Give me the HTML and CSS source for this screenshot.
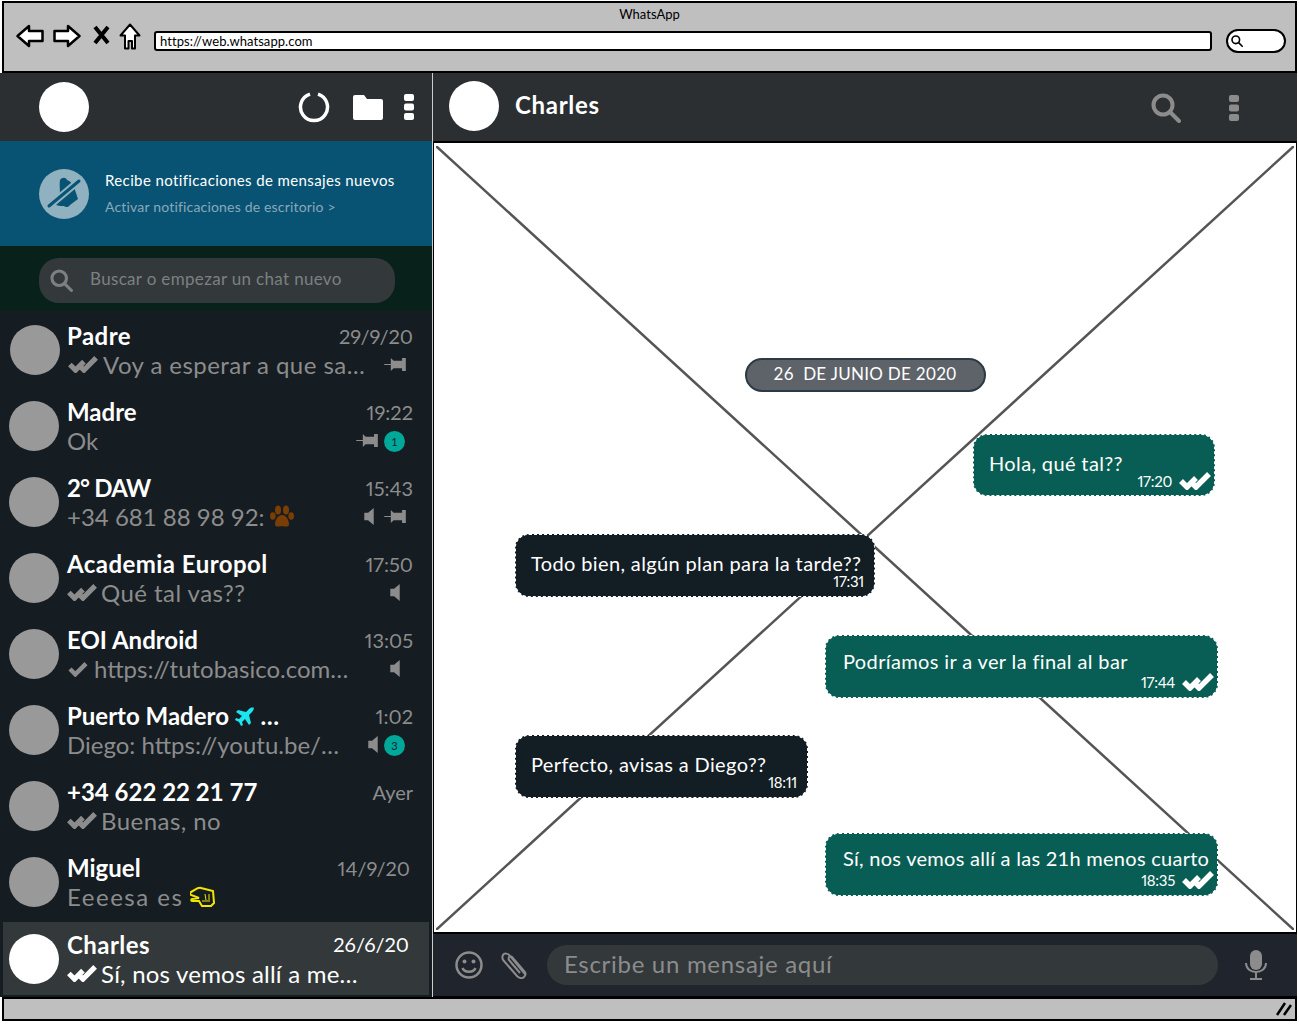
FILE: index.html
```html
<!DOCTYPE html>
<html lang="es">
<head>
	<meta charset="UTF-8">
	<title>WhatsApp</title>
	<link rel="stylesheet" href="styles.css">
</head>
<body>
	<svg class="defs" width="0" height="0">
		<symbol id="i-double" viewBox="0 0 32 18">
			<path d="M2 9l6 6 9-9M13 11l4 4L30 2" fill="none" stroke="currentColor" stroke-width="5.500"/>
		</symbol>
		<symbol id="i-check" viewBox="0 0 22 18">
			<path d="M2 9l6 6L20 3" fill="none" stroke="currentColor" stroke-width="5"/>
		</symbol>
		<symbol id="i-pin" viewBox="0 0 24 16">
			<path d="M0 7.500h7V1l3 3h9V1h4v14h-4v-3h-9l-3 3V8.500H0z" fill="currentColor"/>
		</symbol>
		<symbol id="i-speaker" viewBox="0 0 12 18">
			<path d="M1 5h4l6-5v18l-6-5H1z" fill="currentColor"/>
		</symbol>
		<symbol id="i-search" viewBox="0 0 30 30">
			<circle cx="12" cy="12" r="9.500" fill="none" stroke="currentColor" stroke-width="4"/>
			<path d="M19 19l9 9" stroke="currentColor" stroke-width="4" stroke-linecap="round"/>
		</symbol>
		<symbol id="i-dots" viewBox="0 0 10 26">
			<rect y="0" width="10" height="7" rx="2" fill="currentColor"/>
			<rect y="9.500" width="10" height="7" rx="2" fill="currentColor"/>
			<rect y="19" width="10" height="7" rx="2" fill="currentColor"/>
		</symbol>
	</svg>

	<div class="window">
		<header class="browser">
			<div class="browser-title">WhatsApp</div>
			<div class="browser-nav">
				<svg width="28" height="24" viewBox="0 0 28 24"><path d="M1.500 12L13 2v5h13.500v10H13v5z" fill="#fff" stroke="#000" stroke-width="2.500" stroke-linejoin="round"/></svg>
				<svg width="28" height="24" viewBox="0 0 28 24"><path d="M26.500 12L15 2v5H1.500v10H15v5z" fill="#fff" stroke="#000" stroke-width="2.500" stroke-linejoin="round"/></svg>
				<svg class="nav-close" width="17" height="20" viewBox="0 0 17 20"><path d="M2 2l13 16M15 2L2 18" stroke="#000" stroke-width="4"/></svg>
				<svg class="nav-home" width="22" height="27" viewBox="0 0 22 27"><path d="M11 1.500L1.500 12.500H6V25.500h3.500V18h3.500v7.500H16V12.500h4.500z" fill="#fff" stroke="#000" stroke-width="2" stroke-linejoin="round"/></svg>
				<div class="url-box">https://web.whatsapp.com</div>
				<div class="find-box">
					<svg width="12" height="12" viewBox="0 0 30 30"><use href="#i-search"/></svg>
				</div>
			</div>
		</header>

		<div class="app">
			<aside class="sidebar">
				<div class="side-head">
					<div class="avatar avatar-me"></div>
					<div class="side-tools">
						<svg width="32" height="32" viewBox="0 0 32 32"><path d="M12 3.200A13.500 13.500 0 1 0 20 3.200" fill="none" stroke="#fff" stroke-width="3.500"/></svg>
						<svg width="30" height="25" viewBox="0 0 30 25"><path d="M2 0h9l3 4h14a2 2 0 0 1 2 2v17a2 2 0 0 1-2 2H2a2 2 0 0 1-2-2V2a2 2 0 0 1 2-2z" fill="#fff"/></svg>
						<svg class="tool-dots" width="10" height="26"><use href="#i-dots"/></svg>
					</div>
				</div>

				<div class="notice">
					<div class="notice-icon">
						<svg width="38" height="38" viewBox="0 0 38 38">
							<path d="M15 5c2-3 6-3 7 0 5 2 7 6 8 10l3 9-8 6c-1 2-4 3-6 1-2 0-6 0-8-1l3-5c2-6 0-14 1-20z" fill="#085373"/>
							<path d="M3 32L35 5" stroke="#8fb1c0" stroke-width="7"/>
							<path d="M4 31L34 6" stroke="#085373" stroke-width="3" stroke-linecap="round"/>
						</svg>
					</div>
					<div class="notice-text">
						<div class="notice-title">Recibe notificaciones de mensajes nuevos</div>
						<div class="notice-sub">Activar notificaciones de escritorio &gt;</div>
					</div>
				</div>

				<div class="search-wrap">
					<div class="search-box">
						<svg width="23" height="23" viewBox="0 0 30 30"><use href="#i-search"/></svg>
						<span class="search-hint">Buscar o empezar un chat nuevo</span>
					</div>
				</div>

				<div class="chat-list">
					<div class="chat chat-first">
						<div class="avatar"></div>
						<div class="chat-body">
							<div class="chat-line"><span class="chat-name name-wide">Padre</span><span class="chat-time">29/9/20</span></div>
							<div class="chat-line">
								<span class="chat-msg msg-wide"><svg class="tick" width="30" height="17"><use href="#i-double"/></svg>Voy a esperar a que sa…</span>
								<span class="chat-meta"><svg width="23" height="15"><use href="#i-pin"/></svg></span>
							</div>
						</div>
					</div>
					<div class="chat">
						<div class="avatar"></div>
						<div class="chat-body">
							<div class="chat-line"><span class="chat-name">Madre</span><span class="chat-time">19:22</span></div>
							<div class="chat-line">
								<span class="chat-msg">Ok</span>
								<span class="chat-meta"><svg width="23" height="15"><use href="#i-pin"/></svg><span class="badge">1</span></span>
							</div>
						</div>
					</div>
					<div class="chat">
						<div class="avatar"></div>
						<div class="chat-body">
							<div class="chat-line"><span class="chat-name name-narrow">2° DAW</span><span class="chat-time">15:43</span></div>
							<div class="chat-line">
								<span class="chat-msg">+34 681 88 98 92:<svg class="paw" width="24" height="23" viewBox="0 0 24 23"><ellipse cx="8" cy="5" rx="3" ry="4.500" fill="#7a3e05"/><ellipse cx="16" cy="5" rx="3" ry="4.500" fill="#7a3e05"/><ellipse cx="2.800" cy="11" rx="2.800" ry="3.800" fill="#7a3e05"/><ellipse cx="21.200" cy="11" rx="2.800" ry="3.800" fill="#7a3e05"/><path d="M12 10c4 0 7 5 7 9 0 3-3 3-7 2-4 1-7 1-7-2 0-4 3-9 7-9z" fill="#7a3e05"/></svg></span>
								<span class="chat-meta"><svg width="12" height="17"><use href="#i-speaker"/></svg><svg width="23" height="15"><use href="#i-pin"/></svg></span>
							</div>
						</div>
					</div>
					<div class="chat">
						<div class="avatar"></div>
						<div class="chat-body">
							<div class="chat-line"><span class="chat-name name-wide">Academia Europol</span><span class="chat-time">17:50</span></div>
							<div class="chat-line">
								<span class="chat-msg msg-wide"><svg class="tick" width="30" height="17"><use href="#i-double"/></svg>Qué tal vas??</span>
								<span class="chat-meta meta-solo"><svg width="12" height="17"><use href="#i-speaker"/></svg></span>
							</div>
						</div>
					</div>
					<div class="chat">
						<div class="avatar"></div>
						<div class="chat-body">
							<div class="chat-line"><span class="chat-name">EOI Android</span><span class="chat-time">13:05</span></div>
							<div class="chat-line">
								<span class="chat-msg"><svg class="tick tick-one" width="22" height="16"><use href="#i-check"/></svg>https://tutobasico.com…</span>
								<span class="chat-meta meta-solo"><svg width="12" height="17"><use href="#i-speaker"/></svg></span>
							</div>
						</div>
					</div>
					<div class="chat">
						<div class="avatar"></div>
						<div class="chat-body">
							<div class="chat-line"><span class="chat-name">Puerto Madero <svg class="plane" width="20" height="20" viewBox="0 0 20 20"><path d="M19 1c-2-1-4 0-5 1l-3 3L3 3 1 5l6 4-3 3-3-1-1 2 4 2 2 4 2-1-1-3 3-3 4 6 2-2-2-8 3-3c1-1 2-3 2-5z" fill="#19e6ee"/></svg> …</span><span class="chat-time">1:02</span></div>
							<div class="chat-line">
								<span class="chat-msg">Diego: https://youtu.be/…</span>
								<span class="chat-meta"><svg width="12" height="17"><use href="#i-speaker"/></svg><span class="badge">3</span></span>
							</div>
						</div>
					</div>
					<div class="chat">
						<div class="avatar"></div>
						<div class="chat-body">
							<div class="chat-line"><span class="chat-name">+34 622 22 21 77</span><span class="chat-time">Ayer</span></div>
							<div class="chat-line">
								<span class="chat-msg msg-wide"><svg class="tick" width="30" height="17"><use href="#i-double"/></svg>Buenas, no</span>
							</div>
						</div>
					</div>
					<div class="chat chat-old">
						<div class="avatar"></div>
						<div class="chat-body">
							<div class="chat-line"><span class="chat-name">Miguel</span><span class="chat-time">14/9/20</span></div>
							<div class="chat-line">
								<span class="chat-msg msg-loose">Eeeesa es<svg class="hand" width="25" height="22" viewBox="0 0 25 22"><path d="M1 6c4-2 7-5 10-4l12 3 1 12-3 3-9 0-3-5-7 0c-1 0-1-2 0-2l7-1-8-3c-1-1-1-3 0-3z" fill="none" stroke="#f2e600" stroke-width="2"/><path d="M15 8l1 6M19 8l0 6M12 15l8 0" fill="none" stroke="#f2e600" stroke-width="1"/></svg></span>
							</div>
						</div>
					</div>
					<div class="chat chat-active">
						<div class="avatar avatar-me"></div>
						<div class="chat-body">
							<div class="chat-line"><span class="chat-name name-wide">Charles</span><span class="chat-time">26/6/20</span></div>
							<div class="chat-line">
								<span class="chat-msg msg-slight"><svg class="tick" width="30" height="17"><use href="#i-double"/></svg>Sí, nos vemos allí a me…</span>
							</div>
						</div>
					</div>
				</div>
			</aside>

			<main class="conversation">
				<div class="conv-head">
					<div class="avatar avatar-me"></div>
					<div class="conv-name">Charles</div>
					<svg class="conv-search" width="30" height="30"><use href="#i-search"/></svg>
					<svg class="conv-dots" width="10" height="26"><use href="#i-dots"/></svg>
				</div>

				<div class="canvas">
					<svg class="canvas-x" viewBox="0 0 100 100" preserveAspectRatio="none">
						<path d="M0 0L100 100M100 0L0 100" stroke="#555" stroke-width="2.500" vector-effect="non-scaling-stroke"/>
					</svg>
					<div class="day-pill">26&nbsp; DE JUNIO DE 2020</div>

					<div class="bubble bubble-out bubble-first">
						<div class="bubble-text">Hola, qué tal??</div>
						<div class="bubble-meta">17:20<svg width="32" height="18"><use href="#i-double"/></svg></div>
					</div>
					<div class="bubble bubble-in">
						<div class="bubble-text">Todo bien, algún plan para la tarde??</div>
						<div class="bubble-meta">17:31</div>
					</div>
					<div class="bubble bubble-out bubble-wide">
						<div class="bubble-text text-up">Podríamos ir a ver la final al bar</div>
						<div class="bubble-meta">17:44<svg width="32" height="18"><use href="#i-double"/></svg></div>
					</div>
					<div class="bubble bubble-in bubble-short">
						<div class="bubble-text">Perfecto, avisas a Diego??</div>
						<div class="bubble-meta">18:11</div>
					</div>
					<div class="bubble bubble-out bubble-wide bubble-last">
						<div class="bubble-text text-higher">Sí, nos vemos allí a las 21h menos cuarto</div>
						<div class="bubble-meta">18:35<svg width="32" height="18"><use href="#i-double"/></svg></div>
					</div>
				</div>

				<div class="composer">
					<svg width="28" height="28" viewBox="0 0 28 28"><circle cx="14" cy="14" r="12.500" fill="none" stroke="#8c8c8c" stroke-width="2.500"/><circle cx="9.500" cy="10.500" r="2" fill="#8c8c8c"/><circle cx="18.500" cy="10.500" r="2" fill="#8c8c8c"/><path d="M7.500 17c2 5 11 5 13 0" fill="none" stroke="#8c8c8c" stroke-width="2.500"/></svg>
					<svg class="clip" width="27" height="28" viewBox="0 0 27 28"><path d="M24 23L9 5c-2-3-6-3-7-1s-1 4 1 6l13 15c2 2 5 3 7 1s2-4 0-6L11 6c-1-1-3-1-3 0s-1 2 0 3l11 13" fill="none" stroke="#8c8c8c" stroke-width="2"/></svg>
					<div class="msg-input">Escribe un mensaje aquí</div>
					<svg class="mic" width="22" height="30" viewBox="0 0 22 30"><rect x="5" y="0" width="12" height="20" rx="6" fill="#8c8c8c"/><path d="M1 13c0 12 20 12 20 0M11 23v6M5 29h12" fill="none" stroke="#8c8c8c" stroke-width="2"/></svg>
				</div>
			</main>
		</div>

		<footer class="statusbar">
			<svg width="16" height="14" viewBox="0 0 16 14"><path d="M1 13L9 1M8 13L15 3" stroke="#000" stroke-width="2.500"/></svg>
		</footer>
	</div>
</body>
</html>
```

FILE: styles.css
```css
body{
	margin: 0;
	background: #fff;
	font-family: "Lato", "Open Sans", sans-serif;
}
.defs{
	position: absolute;
}
.window{
	width: 1297px;
	padding-top: 1px;
}

/* browser chrome */
.browser{
	height: 68px;
	margin-left: 2px;
	background: #bfbfbf;
	border: 2px solid #000;
}
.browser-title{
	height: 19px;
	line-height: 22px;
	text-align: center;
	font-size: 13px;
	color: #000;
}
.browser-nav{
	display: flex;
	align-items: flex-start;
	padding: 2px 9px 0 12px;
	gap: 9px;
}
.nav-close{
	margin: 1px 0 0 3px;
}
.nav-home{
	margin-top: -1px;
}
.url-box{
	flex: 1;
	height: 16px;
	margin: 7px 0 0 4px;
	padding-left: 4px;
	line-height: 16px;
	font-size: 13px;
	letter-spacing: .07px;
	color: #000;
	background: #fff;
	border: 2px solid #000;
	border-radius: 3px;
}
.find-box{
	display: flex;
	align-items: center;
	box-sizing: border-box;
	width: 60px;
	height: 24px;
	margin: 5px 0 0 5px;
	padding-left: 3px;
	color: #000;
	background: #fff;
	border: 2px solid #000;
	border-radius: 13px;
}

/* layout */
.app{
	display: flex;
	height: 924px;
}
.avatar{
	flex: none;
	width: 50px;
	height: 50px;
	border-radius: 50%;
	background: #999;
}
.avatar-me{
	background: #fff;
}

/* sidebar */
.sidebar{
	display: flex;
	flex-direction: column;
	width: 432px;
	background: #151c22;
	border-right: 1px solid #ccc;
}
.side-head{
	display: flex;
	align-items: center;
	justify-content: space-between;
	height: 68px;
	padding: 0 18px 0 39px;
	background: #2b2f32;
}
.side-tools{
	display: flex;
	align-items: center;
	gap: 23px;
}
.tool-dots{
	color: #fff;
	margin-left: -2px;
}
.notice{
	display: flex;
	align-items: center;
	gap: 16px;
	height: 105px;
	padding-left: 39px;
	background: #085373;
}
.notice-icon{
	display: flex;
	align-items: center;
	justify-content: center;
	width: 50px;
	height: 50px;
	border-radius: 50%;
	background: #8fb1c0;
}
.notice-text{
	margin-bottom: 2px;
}
.notice-title{
	font-size: 15px;
	letter-spacing: .38px;
	color: #fff;
}
.notice-sub{
	margin-top: 9px;
	font-size: 14px;
	letter-spacing: .18px;
	color: #8aa9b8;
}
.search-wrap{
	height: 65px;
	padding: 12px 37px 0 39px;
	box-sizing: border-box;
	background: #08211b;
}
.search-box{
	display: flex;
	align-items: center;
	gap: 17px;
	height: 45px;
	padding-left: 11px;
	font-size: 17px;
	letter-spacing: .33px;
	color: #7c8082;
	background: #33383b;
	border-radius: 20px;
}
.search-hint{
	padding-bottom: 4px;
}
.chat-list{
	flex: 1;
	display: flex;
	flex-direction: column;
	padding-top: 1px;
}
.chat{
	display: flex;
	align-items: center;
	gap: 8px;
	height: 76px;
	padding: 0 19px 0 9px;
	box-sizing: border-box;
}
.chat-first .avatar{
	margin: 0 -1px 0 1px;
}
.chat-first .tick{
	margin: 0 5px 0 1px;
}
.chat-old .chat-time{
	margin-right: 3px;
}
.chat-active{
	height: 73px;
	margin: 2px 3px 0;
	padding: 0 16px 0 6px;
	background: #33393b;
}
.chat-active .chat-time{
	color: #fff;
	margin-right: 4px;
}
.chat-active .chat-msg{
	color: #fff;
}
.chat-body{
	flex: 1;
	min-width: 0;
}
.chat-line{
	display: flex;
	align-items: center;
	justify-content: space-between;
	height: 29px;
}
.chat-name{
	font-size: 24px;
	font-weight: 700;
	color: #fff;
	white-space: nowrap;
}
.name-wide{
	letter-spacing: .45px;
}
.name-narrow{
	letter-spacing: -.8px;
}
.chat-time{
	font-size: 20px;
	font-variant-numeric: proportional-nums;
	color: #8c8c8c;
}
.chat-msg{
	display: flex;
	align-items: center;
	font-size: 24px;
	color: #8c8c8c;
	white-space: nowrap;
}
.msg-wide{
	letter-spacing: .45px;
}
.msg-slight{
	letter-spacing: .22px;
}
.msg-loose{
	letter-spacing: 1.5px;
}
.chat-meta{
	display: flex;
	align-items: center;
	gap: 9px;
	padding-right: 6px;
	color: #8c8c8c;
}
.meta-solo{
	padding-right: 12px;
}
.badge{
	display: block;
	width: 21px;
	height: 21px;
	margin: 2px 2px 0 -4px;
	line-height: 21px;
	border-radius: 50%;
	text-align: center;
	font-size: 11px;
	letter-spacing: 0;
	color: #123;
	background: #00a899;
}
.tick{
	margin: 0 4px 0 0;
}
.tick-one{
	margin-right: 5px;
}
.paw{
	margin-left: 5px;
}
.hand{
	margin-left: 7px;
}
.plane{
	vertical-align: -2px;
}

/* conversation */
.conversation{
	flex: 1;
	display: flex;
	flex-direction: column;
	min-width: 0;
	background: #000;
}
.conv-head{
	display: flex;
	align-items: center;
	flex: none;
	height: 68px;
	padding: 0 58px 0 16px;
	background: #2b2f32;
}
.conv-head .avatar{
	margin-bottom: 2px;
}
.conv-name{
	flex: 1;
	margin: 0 0 6px 16px;
	font-size: 24px;
	font-weight: 700;
	letter-spacing: .7px;
	color: #fff;
}
.conv-search{
	color: #8c8c8c;
	margin: 2px 48px 0 0;
}
.conv-dots{
	color: #8c8c8c;
	margin-top: 2px;
}
.canvas{
	position: relative;
	display: flex;
	flex-direction: column;
	box-sizing: border-box;
	height: 789px;
	margin: 2px 1px;
	padding-top: 215px;
	background: #fff;
	overflow: hidden;
}
.canvas-x{
	position: absolute;
	left: 2px;
	top: 3px;
	width: calc(100% - 4px);
	height: calc(100% - 5px);
}
.day-pill{
	position: relative;
	align-self: center;
	box-sizing: border-box;
	width: 241px;
	height: 34px;
	line-height: 27px;
	text-align: center;
	font-size: 17px;
	letter-spacing: .3px;
	color: #fff;
	background: #5d6368;
	border: 2px solid #2c3a44;
	border-radius: 17px;
}
.bubble{
	position: relative;
	box-sizing: border-box;
	height: 63px;
	margin-top: 38px;
	padding: 17px 3px 0 15px;
	color: #fff;
	border: 1px dashed #fff;
	border-radius: 14px;
}
.bubble-out{
	align-self: flex-end;
	width: 393px;
	margin-right: 78px;
	background: #085e54;
}
.bubble-first{
	width: 242px;
	height: 62px;
	margin-top: 42px;
	margin-right: 81px;
}
.bubble-wide{
	padding-left: 17px;
}
.bubble-in{
	align-self: flex-start;
	width: 360px;
	margin-left: 81px;
	background: #121d24;
}
.bubble-short{
	width: 293px;
	margin-top: 37px;
}
.bubble-last{
	margin-top: 35px;
}
.bubble-text{
	font-size: 20px;
	line-height: 22px;
	letter-spacing: .37px;
	white-space: nowrap;
}
.text-up{
	margin: -3px 0 3px;
}
.text-higher{
	margin: -4px 0 4px;
	letter-spacing: .27px;
}
.bubble-meta{
	display: flex;
	align-items: center;
	justify-content: flex-end;
	gap: 7px;
	height: 16px;
	margin-top: -1px;
	padding-right: 7px;
	font-size: 15px;
	letter-spacing: -.3px;
	font-variant-numeric: proportional-nums;
}
.bubble-out .bubble-meta{
	padding-right: 0;
}
.composer{
	display: flex;
	align-items: center;
	flex: none;
	height: 62px;
	padding: 0 30px 0 22px;
	background: #20242c;
}
.clip{
	margin-left: 18px;
}
.msg-input{
	flex: 1;
	height: 40px;
	line-height: 38px;
	margin: 0 27px 0 19px;
	padding-left: 17px;
	font-size: 24px;
	letter-spacing: .7px;
	color: #8c8c8c;
	background: #33383b;
	border-radius: 20px;
}
.statusbar{
	display: flex;
	align-items: center;
	justify-content: flex-end;
	height: 20px;
	margin-left: 2px;
	padding-right: 3px;
	background: #bfbfbf;
	border: 2px solid #000;
}
```
